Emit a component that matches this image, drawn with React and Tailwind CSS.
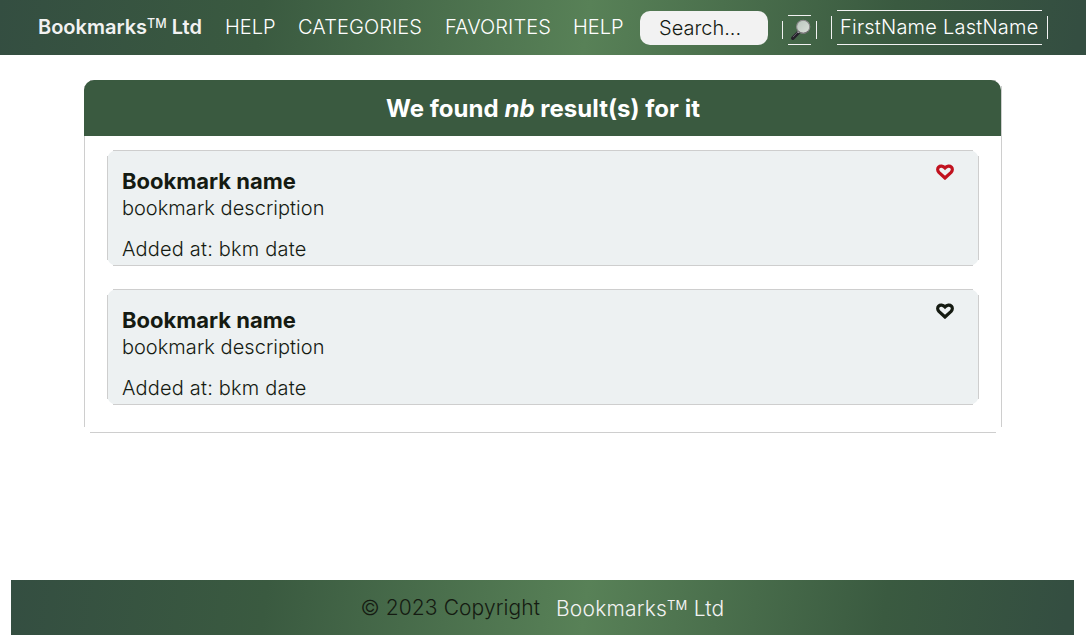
import React from "react";

const BAR =
  "bg-[linear-gradient(98deg,#344e41_0%,#3a5a40_24%,#588157_54%,#3a5a40_82%,#344e41_99%)]";

function Lines({ color }) {
  return (
    <span aria-hidden="true" className="pointer-events-none absolute inset-0">
      <span className={`absolute inset-x-[6px] top-0 h-px ${color}`} />
      <span className={`absolute inset-x-[6px] bottom-0 h-px ${color}`} />
      <span className={`absolute inset-y-[6px] left-0 w-px ${color}`} />
      <span className={`absolute inset-y-[6px] right-0 w-px ${color}`} />
    </span>
  );
}

function Magnifier() {
  return (
    <svg width="22" height="22" viewBox="0 0 22 22" className="ml-[2px] block shrink-0">
      <defs>
        <linearGradient id="lens" x1="0" y1="0" x2="1" y2="1">
          <stop offset="0" stopColor="#b9c5bd" />
          <stop offset="1" stopColor="#dadfd9" />
        </linearGradient>
      </defs>
      <path d="M2.8 19.2 L8.4 13.4" stroke="#242129" strokeWidth="3.6" strokeLinecap="round" />
      <path d="M3.2 17.8 L7.8 13" stroke="#77717d" strokeWidth="0.8" strokeLinecap="round" />
      <path d="M7.8 13.6 L9.6 11.8" stroke="#a9a6ad" strokeWidth="2" />
      <circle cx="13.2" cy="7.8" r="6.6" fill="url(#lens)" stroke="#8c8a8c" strokeWidth="1.1" />
      <path d="M8.4 12.2 A6.6 6.6 0 0 0 18.2 12" fill="none" stroke="#5f5d5f" strokeWidth="0.8" />
    </svg>
  );
}

function Heart({ className }) {
  return (
    <svg width="18" height="16" viewBox="0 0 18 16" className={className}>
      <path
        d="M9 14 L2.9 8.4 C1.4 6.8 1.3 4.5 2.6 3.1 C4.1 1.6 7 1.7 9 3.9 C11 1.7 13.9 1.6 15.4 3.1 C16.7 4.5 16.6 6.8 15.1 8.4 Z"
        fill="none"
        stroke="currentColor"
        strokeWidth="3.2"
      />
    </svg>
  );
}

function Bookmark({ heart }) {
  return (
    <article className="relative flex h-[116px] w-[872px] justify-between rounded-[10px] bg-[#edf1f2] pt-[17px] pr-[25px] pl-[15.4px] text-[#151b12]">
      <Lines color="bg-[#cecece]" />
      <div className="whitespace-nowrap">
        <h2 className="h-[27px] text-[22px] leading-[28px] font-bold">Bookmark name</h2>
        <p className="h-[41px] text-[20px] leading-[28px] font-light tracking-[0.04px]">bookmark description</p>
        <p className="text-[20px] leading-[28px] font-light tracking-[0.2px]">Added at: bkm date</p>
      </div>
      <Heart className={`-mt-[3px] ${heart}`} />
    </article>
  );
}

export default function App() {
  return (
    <div className="flex h-[635px] w-[1086px] flex-col overflow-hidden bg-white font-['Inter',sans-serif]">
      <header className={`flex h-[55px] shrink-0 items-start whitespace-nowrap pl-[38px] text-[20px] leading-[34px] text-white ${BAR}`}>
        <span className="mt-[10px] w-[187px] font-semibold text-[#f2f2f2]">
          Bookmarks<span className="relative -top-[6px] text-[12.5px] leading-none font-medium">TM</span> Ltd
        </span>
        <nav className="mt-[10px] flex font-light">
          <a className="w-[73px]">HELP</a>
          <a className="w-[147px] tracking-[0.08px]">CATEGORIES</a>
          <a className="w-[128px] tracking-[0.08px]">FAVORITES</a>
          <a className="w-[67px]">HELP</a>
        </nav>
        <div className="mt-[11px] h-[34px] w-[128px] rounded-[10px] bg-[#f2f2f2] pl-[19px] font-light text-[#151b12]">Search...</div>
        <button className="relative mt-[15px] ml-[14px] flex h-[30px] w-[35px] justify-center pt-[4px]">
          <Lines color="bg-[#f2f2f2]" />
          <Magnifier />
        </button>
        <button className="relative mt-[10px] ml-[14px] h-[35px] w-[217px] pb-[1px] pl-[9px] text-left leading-[33px] font-light tracking-[0.22px]">
          <Lines color="bg-[#f2f2f2]" />
          FirstName LastName
        </button>
      </header>

      <main className="flex flex-1 flex-col items-center pt-[25px]">
        <section className="relative ml-[-1px] h-[353px] w-[918px]">
          <Lines color="bg-[#cecece]" />
          <h1 className="relative mr-px h-[56px] rounded-t-[10px] bg-[#3a5a40] pl-[2px] text-center text-[24px] leading-[57px] font-bold tracking-[0.03px] text-white">
            We found <em>nb</em> result(s) for it
          </h1>
          <div className="flex flex-col items-center gap-[23px] pt-[14px]">
            <Bookmark heart="text-[#c1121f]" />
            <Bookmark heart="text-[#151b12]" />
          </div>
        </section>
      </main>

      <footer className={`mr-[12px] ml-[11px] flex h-[55px] shrink-0 whitespace-nowrap pl-[349.5px] text-[21px] leading-[28px] font-light ${BAR}`}>
        <span className="mt-[14px] w-[195.5px] tracking-[0.1px] text-[#151b12]">© 2023 Copyright</span>
        <span className="mt-[15px] tracking-[0.2px] text-[#f2f2f2]">
          Bookmarks<span className="relative -top-[6px] text-[13px] leading-none font-normal">TM</span> Ltd
        </span>
      </footer>
    </div>
  );
}
